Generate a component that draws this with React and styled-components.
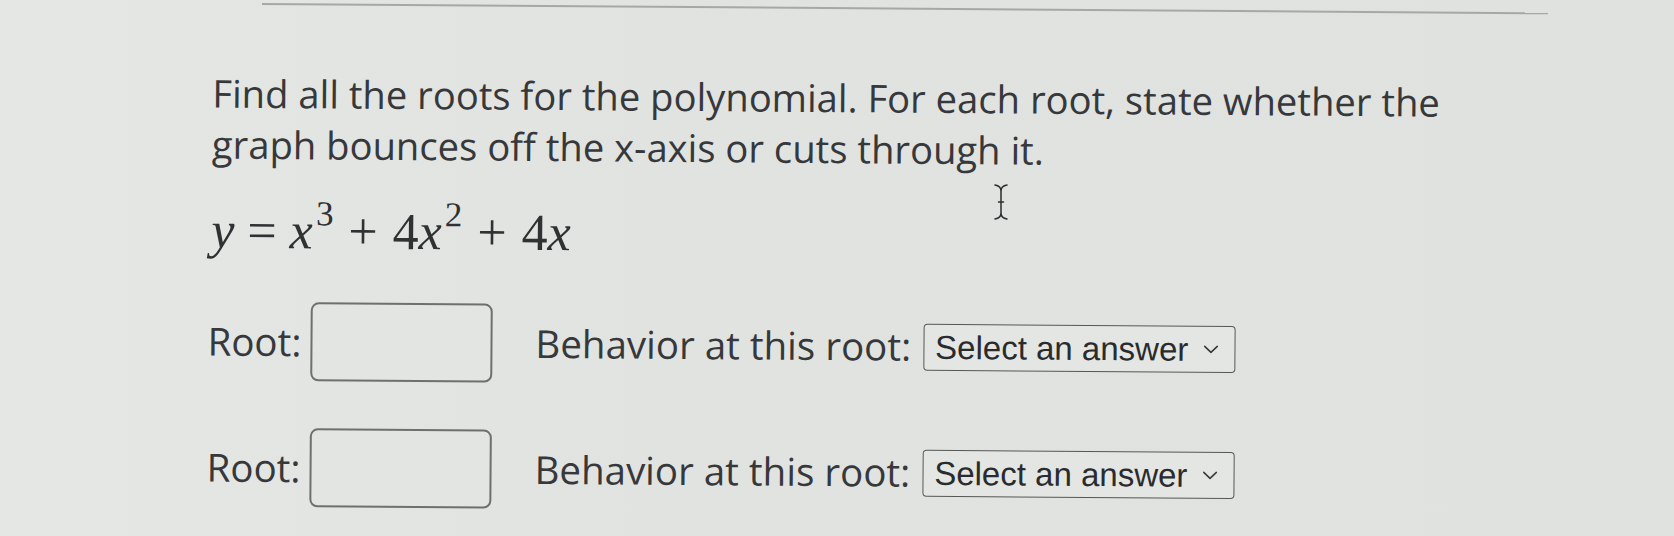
import React from "react";
import styled, { createGlobalStyle } from "styled-components";

const GlobalStyle = createGlobalStyle`
  html, body {
    margin: 0;
    padding: 0;
    background: #e1e3e0;
  }
  body {
    font-family: "Open Sans", "Noto Sans", sans-serif;
    color: #36383b;
  }
`;

const Page = styled.div`
  position: relative;
  width: 1674px;
  height: 536px;
  overflow: hidden;
  background: linear-gradient(90deg, #e5e7e4 0%, #e1e3e0 40%, #e0e2df 100%);
`;

const Sheet = styled.div`
  transform: rotate(0.42deg);
  transform-origin: 0 0;
`;

const TopRule = styled.div`
  margin-left: 262px;
  width: 1286px;
  height: 2px;
  margin-top: 1px;
  background: #a6a8a6;
`;

const Content = styled.div`
  padding: 63px 0 0 213px;
`;

const Prompt = styled.p`
  margin: 0;
  width: 1290px;
  font-size: 38.2px;
  line-height: 51px;
  color: #36383b;
`;

const Equation = styled.div`
  margin-top: 34px;
  font-family: "Liberation Serif", "DejaVu Serif", serif;
  font-size: 52px;
  line-height: 54px;
  color: #2f3133;
  white-space: nowrap;
`;

const Var = styled.i`
  font-style: italic;
`;

const Op = styled.span`
  margin: 0 ${(p) => p.$gap || 15}px;
`;

const Sup = styled.sup`
  font-size: 35px;
  vertical-align: 0;
  position: relative;
  top: -23px;
  margin-left: 3px;
`;

const Row = styled.div`
  display: flex;
  align-items: center;
  margin-top: ${(p) => p.$top}px;
`;

const Label = styled.span`
  font-size: 38.5px;
  line-height: 51px;
  color: #36383b;
  white-space: nowrap;
`;

const RootLabel = styled(Label)`
  margin-left: -3px;
  margin-right: 9px;
`;

const BehaviorLabel = styled(Label)`
  margin-left: 43px;
  margin-right: 12px;
`;

const AnswerBox = styled.div`
  box-sizing: border-box;
  width: 182px;
  height: 79px;
  border: 2px solid #6e706f;
  border-radius: 8px;
  background: #e3e5e2;
`;

const SelectBox = styled.div`
  box-sizing: border-box;
  display: flex;
  align-items: center;
  justify-content: space-between;
  width: 312px;
  height: 47px;
  margin-top: 2px;
  padding: 0 16px 0 11px;
  border: 1.5px solid #555856;
  border-radius: 4px;
  background: #e4e6e3;
  font-family: "Liberation Sans", Arial, sans-serif;
  font-size: 33px;
  color: #2a2b2d;
  white-space: nowrap;
`;

const Cursor = styled.svg`
  position: absolute;
  left: 990px;
  top: 183px;
`;

function Chevron() {
  return (
    <svg width="15" height="9" viewBox="0 0 15 9" fill="none">
      <path d="M1.2 1.5 L7.5 7.5 L13.8 1.5" stroke="#3a3b3d" strokeWidth="1.6" strokeLinecap="round" strokeLinejoin="round" />
    </svg>
  );
}

function RootRow({ top }) {
  return (
    <Row $top={top}>
      <RootLabel>Root:</RootLabel>
      <AnswerBox />
      <BehaviorLabel>Behavior at this root:</BehaviorLabel>
      <SelectBox>
        <span>Select an answer</span>
        <Chevron />
      </SelectBox>
    </Row>
  );
}

export default function App() {
  return (
    <>
      <GlobalStyle />
      <Page>
        <Sheet>
          <TopRule />
          <Content>
            <Prompt>
              Find all the roots for the polynomial. For each root, state whether the graph bounces off the x-axis or cuts through it.
            </Prompt>
            <Equation>
              <Var>y</Var>
              <Op $gap={13}>=</Op>
              <Var>x</Var>
              <Sup>3</Sup>
              <Op>+</Op>4<Var>x</Var>
              <Sup>2</Sup>
              <Op>+</Op>4<Var>x</Var>
            </Equation>
            <RootRow top={38} />
            <RootRow top={47} />
          </Content>
        </Sheet>
        <Cursor width="22" height="38" viewBox="0 0 22 38" fill="none">
          <path d="M5 2 Q11 3 11 8 L11 30 Q11 35 5 36 M17 2 Q11 3 11 8 M11 30 Q11 35 17 36 M8.5 19 L13.5 19" stroke="#2c2d2f" strokeWidth="1.5" strokeLinecap="round" />
        </Cursor>
      </Page>
    </>
  );
}
